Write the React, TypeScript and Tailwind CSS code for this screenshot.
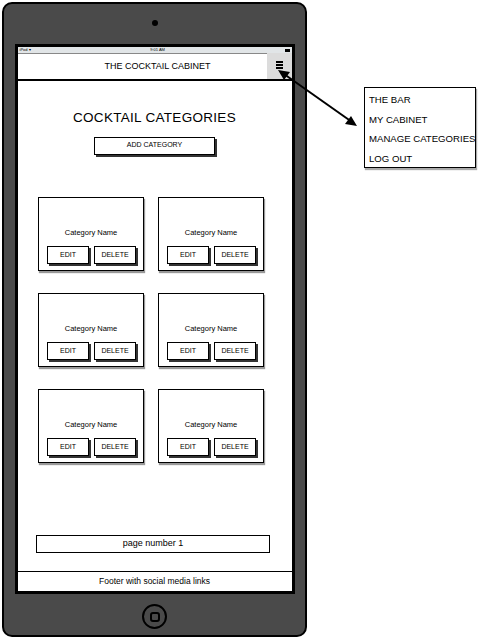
import React from "react";

const font = { fontFamily: '"Liberation Sans", Arial, sans-serif' };

function Btn({ label, w }: { label: string; w: string }) {
  return (
    <div
      className={`${w} h-[18px] border-[1.5px] border-black bg-white flex items-center justify-center text-[7px] text-black shadow-[2px_2px_0_#333]`}
    >
      {label}
    </div>
  );
}

function Card() {
  return (
    <div className="w-[106px] h-[74px] border-[1.5px] border-black bg-white shadow-[1px_2px_1px_#999] flex flex-col items-center">
      <div className="mt-[29px] text-[7.5px] text-black">Category Name</div>
      <div className="mt-[8px] flex gap-[5px] pl-[1px]">
        <Btn label="EDIT" w="w-[42px]" />
        <Btn label="DELETE" w="w-[42px]" />
      </div>
    </div>
  );
}

export default function App() {
  return (
    <div className="relative w-[487px] h-[640px] bg-white overflow-hidden" style={font}>
      <div className="flex items-start">
        {/* Device */}
        <div className="ml-[2px] mt-[2px] w-[305px] h-[635px] rounded-[10px] border-2 border-black bg-[#4a4a4a] flex flex-col items-center">
          <div className="mt-[16px] w-[6px] h-[6px] rounded-full bg-black" />
          {/* Screen */}
          <div className="mt-[18px] w-[280px] h-[550px] border-[3px] border-black bg-white flex flex-col">
            {/* status bar */}
            <div className="h-[6px] bg-[#e1e5e7] flex items-center justify-between px-[2px] text-[4px] leading-none text-black">
              <span>iPod ▾</span>
              <span>9:01 AM</span>
              <span className="w-[5px] h-[3px] bg-black" />
            </div>
            {/* nav */}
            <div className="h-[28px] border-b-[2px] border-black flex">
              <div className="flex-1 border-t border-[#888] flex items-center justify-center text-[9px] text-black pl-[31px]">
                THE COCKTAIL CABINET
              </div>
              <div className="w-[25px] bg-[#dcdcdc] flex justify-center pt-[8px]">
                <div className="flex flex-col gap-[1.5px]">
                  <div className="w-[7px] h-[1.5px] bg-black" />
                  <div className="w-[7px] h-[1.5px] bg-black" />
                  <div className="w-[7px] h-[1.5px] bg-black" />
                </div>
              </div>
            </div>
            {/* main */}
            <div className="flex-1 flex flex-col items-center">
              <div className="mt-[30px] text-[13.5px] leading-none text-black tracking-[0.3px]">
                COCKTAIL CATEGORIES
              </div>
              <div className="mt-[12px] w-[121px] h-[18px] border-[1.5px] border-black bg-white shadow-[2px_2px_0_#333] flex items-center justify-center text-[7px] text-black">
                ADD CATEGORY
              </div>
              <div className="mt-[42px] ml-[-7px] grid grid-cols-2 gap-x-[14px] gap-y-[22px]">
                <Card />
                <Card />
                <Card />
                <Card />
                <Card />
                <Card />
              </div>
              <div className="mt-[72px] ml-[-3px] w-[234px] h-[18px] border-[1.5px] border-black flex items-center justify-center text-[9px] text-black">
                page number 1
              </div>
            </div>
            {/* footer */}
            <div className="h-[20px] border-t-[1.5px] border-black flex items-center justify-center text-[8.5px] text-black">
              Footer with social media links
            </div>
          </div>
          {/* home button */}
          <div className="mt-[10px] w-[25px] h-[25px] rounded-full border-2 border-black flex items-center justify-center">
            <div className="w-[10px] h-[10px] rounded-[3px] border-2 border-black" />
          </div>
        </div>
        {/* menu annotation */}
        <div className="ml-[57px] mt-[87px] w-[112px] h-[81px] border border-black bg-white shadow-[1px_2px_1px_#aaa] flex flex-col gap-[8.5px] pt-[6px] pl-[4px] text-[9.6px] leading-[11px] whitespace-nowrap text-black">
          <div>THE BAR</div>
          <div>MY CABINET</div>
          <div>MANAGE CATEGORIES</div>
          <div>LOG OUT</div>
        </div>
      </div>
      {/* arrow */}
      <svg className="absolute left-0 top-0 pointer-events-none" width="487" height="640">
        <line x1="284" y1="74" x2="352" y2="122" stroke="black" strokeWidth="2" />
        <polygon points="278,70 290,72 284,80" fill="black" />
        <polygon points="357,126 345,124 351,116" fill="black" />
      </svg>
    </div>
  );
}
